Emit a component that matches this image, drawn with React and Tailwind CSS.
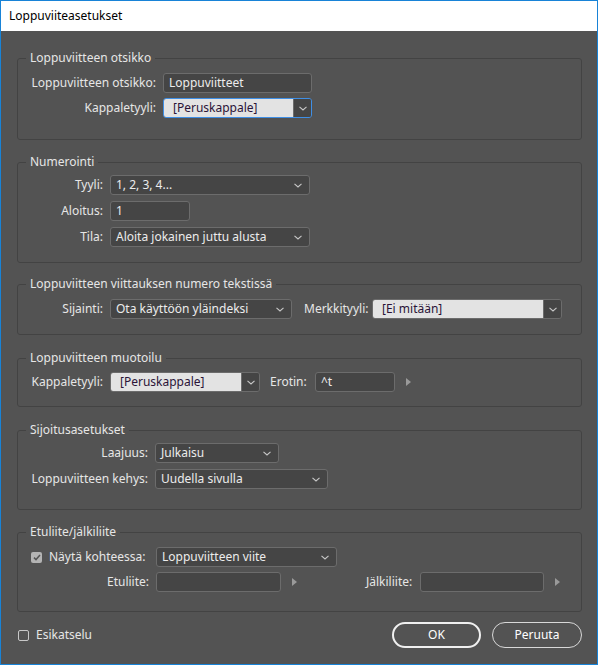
import React from 'react'

const Chevron = () => (
  <svg width="8" height="5" viewBox="0 0 8 5" className="shrink-0">
    <path d="M0.5 0.8 L4 4 L7.5 0.8" fill="none" stroke="#c8c8c8" strokeWidth="1.1" />
  </svg>
)

const Tri = () => (
  <svg width="5" height="8" viewBox="0 0 5 8" className="shrink-0">
    <path d="M0 0 L5 4 L0 8 Z" fill="#9a9a9a" />
  </svg>
)

const Input = ({ w, value }) => (
  <div className={`${w} h-[20px] shrink-0 rounded-[3px] border border-[#6c6c6c] bg-[#454545] px-[5px] leading-[18px] text-[#ececec]`}>
    {value}
  </div>
)

const Select = ({ w, value }) => (
  <div className={`${w} h-[20px] shrink-0 rounded-[3px] border border-[#6c6c6c] bg-[#454545] pl-[5px] pr-[7px] flex items-center justify-between text-[#ececec]`}>
    <span className="leading-[18px]">{value}</span>
    <Chevron />
  </div>
)

const LightSelect = ({ w, value, focus }) => (
  <div className={`${w} h-[20px] shrink-0 rounded-[3px] border ${focus ? 'border-[#3f8fe6]' : 'border-[#6c6c6c]'} flex overflow-hidden`}>
    <div className="flex-1 bg-[#e3e3e3] pl-[9px] leading-[18px] text-[#2b1438]">{value}</div>
    <div className="w-[18px] bg-[#454545] border-l border-[#6c6c6c] flex items-center justify-center">
      <Chevron />
    </div>
  </div>
)

const Label = ({ w, children }) => (
  <div className={`${w} shrink-0 pr-[7px] text-right text-[#e6e6e6]`}>{children}</div>
)

const Group = ({ title, className, children }) => (
  <fieldset className={`ml-[16px] w-[565px] rounded-[3px] border border-[#434343] ${className}`}>
    <legend className="ml-[8px] px-[4px] leading-[16px] text-[#e6e6e6]">{title}</legend>
    {children}
  </fieldset>
)

export default function App() {
  return (
    <div
      className="w-[598px] h-[665px] border border-[#1883d7] flex flex-col bg-[#535353] text-[12px]"
      style={{ fontFamily: '"Segoe UI", "Noto Sans", "Liberation Sans", sans-serif' }}
    >
      <div className="h-[30px] shrink-0 bg-white pl-[8px] flex items-center text-black">Loppuviiteasetukset</div>

      <div className="flex-1 pt-[19px]">
        <Group title="Loppuviitteen otsikko" className="pt-[7px] pb-[21px]">
          <div className="flex items-center">
            <Label w="w-[145px]">Loppuviitteen otsikko:</Label>
            <Input w="w-[149px]" value="Loppuviitteet" />
          </div>
          <div className="flex items-center mt-[5px]">
            <Label w="w-[145px]">Kappaletyyli:</Label>
            <LightSelect w="w-[149px]" value="[Peruskappale]" focus />
          </div>
        </Group>

        <Group title="Numerointi" className="mt-[14px] pt-[5px] pb-[15px]">
          <div className="flex items-center">
            <Label w="w-[92px]">Tyyli:</Label>
            <Select w="w-[200px]" value="1, 2, 3, 4..." />
          </div>
          <div className="flex items-center mt-[6px]">
            <Label w="w-[92px]">Aloitus:</Label>
            <Input w="w-[80px]" value="1" />
          </div>
          <div className="flex items-center mt-[6px]">
            <Label w="w-[92px]">Tila:</Label>
            <Select w="w-[200px]" value="Aloita jokainen juttu alusta" />
          </div>
        </Group>

        <Group title="Loppuviitteen viittauksen numero tekstissä" className="mt-[13px] pt-[7px] pb-[15px]">
          <div className="flex items-center">
            <Label w="w-[92px]">Sijainti:</Label>
            <Select w="w-[182px]" value="Ota käyttöön yläindeksi" />
            <div className="ml-[12px] w-[68px] shrink-0 text-[#e6e6e6]">Merkkityyli:</div>
            <LightSelect w="w-[190px]" value="[Ei mitään]" />
          </div>
        </Group>

        <Group title="Loppuviitteen muotoilu" className="mt-[15px] pt-[6px] pb-[14px]">
          <div className="flex items-center">
            <Label w="w-[92px]">Kappaletyyli:</Label>
            <LightSelect w="w-[150px]" value="[Peruskappale]" />
            <div className="ml-[10px] w-[45px] shrink-0 text-[#e6e6e6]">Erotin:</div>
            <Input w="w-[80px]" value="^t" />
            <div className="ml-[11px] flex items-center"><Tri /></div>
          </div>
        </Group>

        <Group title="Sijoitusasetukset" className="mt-[15px] pt-[5px] pb-[20px]">
          <div className="flex items-center">
            <Label w="w-[137px]">Laajuus:</Label>
            <Select w="w-[124px]" value="Julkaisu" />
          </div>
          <div className="flex items-center mt-[6px]">
            <Label w="w-[137px]">Loppuviitteen kehys:</Label>
            <Select w="w-[173px]" value="Uudella sivulla" />
          </div>
        </Group>

        <Group title="Etuliite/jälkiliite" className="mt-[14px] pt-[7px] pb-[19px]">
          <div className="flex items-center">
            <div className="w-[138px] shrink-0 pl-[13px] pr-[7px] flex items-center">
              <div className="w-[11px] h-[11px] rounded-[2px] bg-[#b4b4b4] flex items-center justify-center">
                <svg width="8" height="7" viewBox="0 0 8 7">
                  <path d="M1 3.6 L3 5.6 L7 1" fill="none" stroke="#555555" strokeWidth="1.5" />
                </svg>
              </div>
              <span className="ml-[7px] text-[#e6e6e6]">Näytä kohteessa:</span>
            </div>
            <Select w="w-[181px]" value="Loppuviitteen viite" />
          </div>
          <div className="flex items-center mt-[5px]">
            <Label w="w-[138px]">Etuliite:</Label>
            <Input w="w-[125px]" value="" />
            <div className="ml-[11px] flex items-center"><Tri /></div>
            <div className="ml-[69px] w-[54px] shrink-0 text-[#e6e6e6]">Jälkiliite:</div>
            <Input w="w-[124px]" value="" />
            <div className="ml-[11px] flex items-center"><Tri /></div>
          </div>
        </Group>

        <div className="mt-[10px] pl-[17px] pr-[15px] flex items-center">
          <div className="flex items-center flex-1">
            <div className="w-[11px] h-[11px] rounded-[2px] border border-[#c8c8c8]" />
            <span className="ml-[7px] text-[#e6e6e6]">Esikatselu</span>
          </div>
          <button className="w-[89px] h-[26px] rounded-full border-2 border-[#f0f0f0] text-white">OK</button>
          <button className="ml-[11px] w-[90px] h-[26px] rounded-full border border-[#d8d8d8] text-white">Peruuta</button>
        </div>
      </div>
    </div>
  )
}
